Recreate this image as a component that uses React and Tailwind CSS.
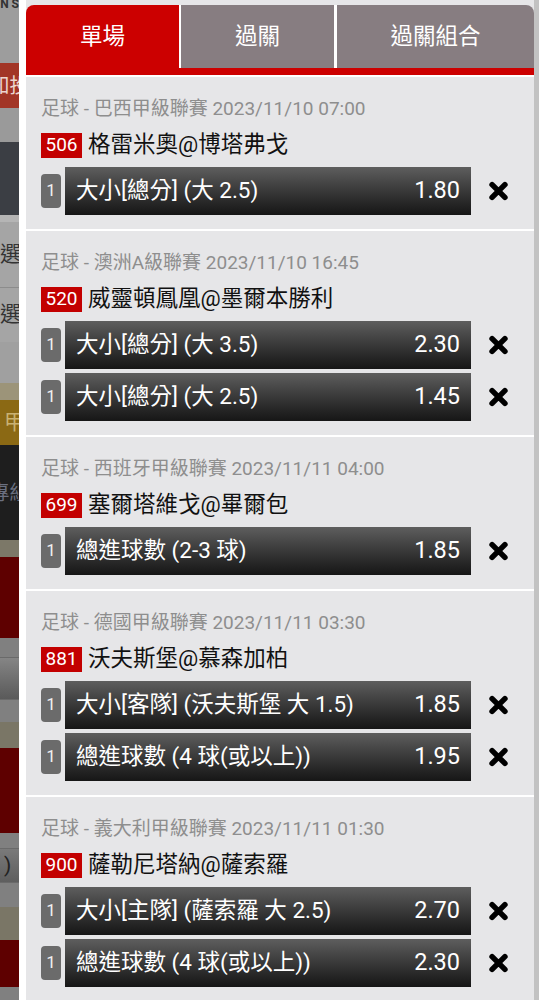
const font = { fontFamily: 'Roboto, "Noto Sans CJK TC", sans-serif' };

// dimmed page behind the slip, only a thin strip shows on the left
const backdrop = [
  { h: 'h-[63px]', bg: 'bg-[#9d9d9d]', text: 'N S', al: 'justify-end', tc: 'text-[#333] text-[12px] font-bold self-start -mt-[5px]' },
  { h: 'h-[45px]', bg: 'bg-[#a23526]', text: '知投', al: 'justify-center', tc: 'text-[#ecd6cf] text-[20px]' },
  { h: 'h-[34px]', bg: 'bg-[#9a9a9a]' },
  { h: 'h-[73px]', bg: 'bg-[#3b3e44]' },
  { h: 'h-[7px]', bg: 'bg-[#b5b5b5]' },
  { h: 'h-[66px]', bg: 'bg-[#a5a5a5] border-b border-[#8c8c8c]', text: '選', al: 'justify-start', tc: 'text-[#333] text-[21px]' },
  { h: 'h-[54px]', bg: 'bg-[#a5a5a5]', text: '選', al: 'justify-start', tc: 'text-[#333] text-[21px]' },
  { h: 'h-[41px]', bg: 'bg-[#a0a0a0]' },
  { h: 'h-[17px]', bg: 'bg-[#9c9479]' },
  { h: 'h-[45px]', bg: 'bg-[#8b6914]', text: '甲', al: 'justify-start pl-[4px]', tc: 'text-[#c9b273] text-[21px]' },
  { h: 'h-[95px]', bg: 'bg-[#1e1e1e]', text: '專組', al: 'justify-center', tc: 'text-[#6b7080] text-[20px]' },
  { h: 'h-[17px]', bg: 'bg-[#7c7868]' },
  { h: 'h-[81px]', bg: 'bg-[#5e0000]' },
  { h: 'h-[19px]', bg: 'bg-[#808080]' },
  { h: 'h-[43px]', bg: 'bg-gradient-to-b from-[#858585] to-[#5a5a5a] border-y border-[#6a6a6a]' },
  { h: 'h-[22px]', bg: 'bg-[#808080]' },
  { h: 'h-[26px]', bg: 'bg-[#7a7666]' },
  { h: 'h-[85px]', bg: 'bg-[#5e0000]' },
  { h: 'h-[15px]', bg: 'bg-[#808080]' },
  { h: 'h-[35px]', bg: 'bg-gradient-to-b from-[#7a7a7a] to-[#5e5e5e] border-y border-[#6a6a6a]', text: ')', al: 'justify-start pl-[4px]', tc: 'text-[#222] text-[21px]' },
  { h: 'h-[24px]', bg: 'bg-[#808080]' },
  { h: 'h-[33px]', bg: 'bg-[#7a7666]' },
  { h: 'h-[47px]', bg: 'bg-[#5e0000]' },
  { h: 'h-[13px]', bg: 'bg-[#808080]' }
];

const matches = [
  {
    league: '足球 - 巴西甲級聯賽 2023/11/10 07:00',
    no: '506',
    match: '格雷米奧@博塔弗戈',
    bets: [['大小[總分] (大 2.5)', '1.80']]
  },
  {
    league: '足球 - 澳洲A級聯賽 2023/11/10 16:45',
    no: '520',
    match: '威靈頓鳳凰@墨爾本勝利',
    bets: [
      ['大小[總分] (大 3.5)', '2.30'],
      ['大小[總分] (大 2.5)', '1.45']
    ]
  },
  {
    league: '足球 - 西班牙甲級聯賽 2023/11/11 04:00',
    no: '699',
    match: '塞爾塔維戈@畢爾包',
    bets: [['總進球數 (2-3 球)', '1.85']]
  },
  {
    league: '足球 - 德國甲級聯賽 2023/11/11 03:30',
    no: '881',
    match: '沃夫斯堡@慕森加柏',
    bets: [
      ['大小[客隊] (沃夫斯堡 大 1.5)', '1.85'],
      ['總進球數 (4 球(或以上))', '1.95']
    ]
  },
  {
    league: '足球 - 義大利甲級聯賽 2023/11/11 01:30',
    no: '900',
    match: '薩勒尼塔納@薩索羅',
    bets: [
      ['大小[主隊] (薩索羅 大 2.5)', '2.70'],
      ['總進球數 (4 球(或以上))', '2.30']
    ]
  }
];

const RemoveIcon = () => (
  <svg viewBox="0 0 24 24" className="ml-[16px] w-[23px] h-[22px]">
    <path d="M5 5 L19 19 M19 5 L5 19" stroke="#000" strokeWidth="6" strokeLinecap="round" fill="none" />
  </svg>
);

const BetRow = ({ label, odds }) => (
  <div className="flex items-center h-[48px]">
    <div className="w-[20px] h-[34px] rounded-[4px] bg-[#6b6b6b] text-[#f0f0f0] text-[17px] flex items-center justify-center">
      1
    </div>
    <div className="ml-[4px] w-[406px] h-[48px] bg-gradient-to-b from-[#5e5e5e] via-[#393939] to-[#161616] flex items-center justify-between pl-[11px] pr-[11px] text-white text-[22.5px]">
      <span className="whitespace-nowrap">{label}</span>
      <span className="text-[23.5px]">{odds}</span>
    </div>
    <RemoveIcon />
  </div>
);

const Match = ({ m }) => (
  <div className="bg-[#e6e6e8] pl-[15px] pt-[20px] pb-[14px]">
    <div className="h-[24px] flex items-center text-[19px] text-[#8e8e8e] whitespace-nowrap">
      {m.league}
    </div>
    <div className="mt-[7px] h-[34px] flex items-center">
      <span className="w-[41px] h-[25px] bg-[#c30000] text-white text-[19px] flex items-center justify-center">
        {m.no}
      </span>
      <span className="ml-[6px] text-[22.5px] text-[#111]">{m.match}</span>
    </div>
    <div className="mt-[5px] flex flex-col gap-[4px]">
      {m.bets.map((b, i) => (
        <BetRow key={i} label={b[0]} odds={b[1]} />
      ))}
    </div>
  </div>
);

export default function App() {
  return (
    <div className="flex w-[539px] h-[1000px] overflow-hidden bg-white" style={font}>
      {/* backdrop strip */}
      <div className="w-[19px] flex-shrink-0">
        {backdrop.map((s, i) => (
          <div key={i} className={`${s.h} ${s.bg} ${s.al || ''} flex items-center overflow-hidden whitespace-nowrap`}>
            {s.text && <span className={`flex-shrink-0 ${s.tc}`}>{s.text}</span>}
          </div>
        ))}
      </div>

      {/* slip panel */}
      <div className="w-[7px] flex-shrink-0 bg-white" />
      <div className="w-[508px] flex-shrink-0 bg-[#e6e6e8] pt-[5px]">
        <div className="flex h-[63px] text-white text-[22.5px]">
          <div className="w-[153px] bg-[#cc0000] rounded-tl-[8px] flex items-center justify-center">單場</div>
          <div className="w-[2px] bg-white" />
          <div className="w-[153px] bg-[#877d81] flex items-center justify-center">過關</div>
          <div className="w-[3px] bg-white" />
          <div className="flex-1 bg-[#877d81] rounded-tr-[8px] flex items-center justify-center">過關組合</div>
        </div>
        <div className="h-[7px] bg-[#cc0000]" />
        <div className="flex flex-col gap-[2px] bg-white pt-[2px]">
          {matches.map((m, i) => (
            <Match key={i} m={m} />
          ))}
        </div>
      </div>
      <div className="flex-1 bg-[#c2c2c2]" />
    </div>
  );
}
